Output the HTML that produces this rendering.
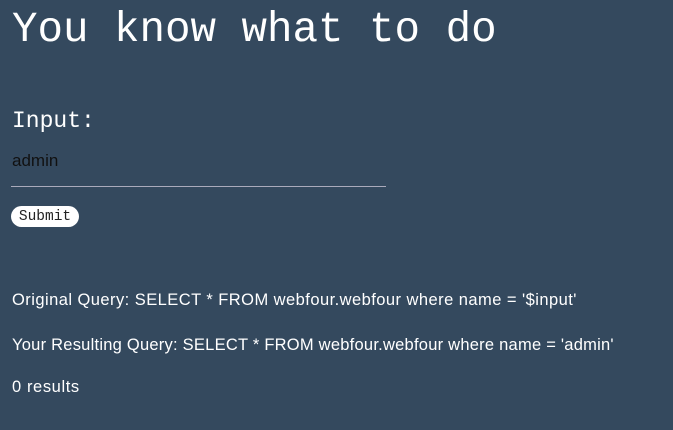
<!DOCTYPE html>
<html><head><style>
body{margin:0;background:#34495e;width:673px;height:430px;overflow:hidden;font-family:"Liberation Sans",sans-serif;color:#fff}
.t{position:absolute;left:12px;top:4px;font:42.5px/52px "Liberation Mono",monospace;margin:0}
.i{position:absolute;left:12px;top:106px;font:23px/30px "Liberation Mono",monospace}
.v{position:absolute;left:12px;top:151px;font-size:17px;color:#111}
.line{position:absolute;left:11px;top:186px;width:375px;height:1px;background:#aab}
.b{position:absolute;left:11px;top:206px;width:68px;height:21px;background:#fff;border-radius:11px;color:#222;font:14.5px/22px "Liberation Mono",monospace;text-align:center}
.p{position:absolute;left:12px;font-size:16.5px;letter-spacing:0.6px}
</style></head><body>
<h1 class="t">You know what to do</h1>
<div class="i">Input:</div>
<div class="v">admin</div>
<div class="line"></div>
<div class="b">Submit</div>
<div class="p" style="top:291px;letter-spacing:0.45px">Original Query: SELECT * FROM webfour.webfour where name = '$input'</div>
<div class="p" style="top:336px;letter-spacing:0.24px">Your Resulting Query: SELECT * FROM webfour.webfour where name = 'admin'</div>
<div class="p" style="top:378px">0 results</div>
</body></html>
